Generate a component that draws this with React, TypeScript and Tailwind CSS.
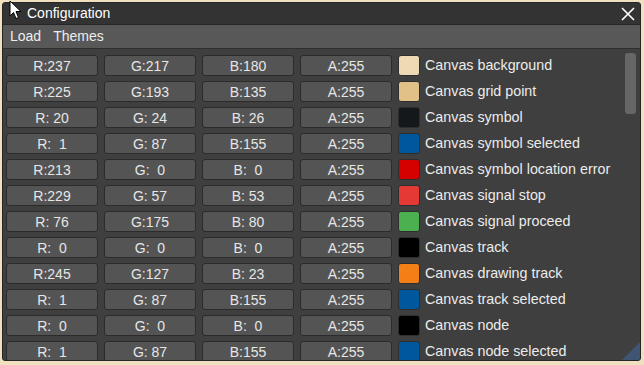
interface ColorEntry {
  label: string
  r: number
  g: number
  b: number
  a: number
}

const entries: ColorEntry[] = [
  { label: 'Canvas background', r: 237, g: 217, b: 180, a: 255 },
  { label: 'Canvas grid point', r: 225, g: 193, b: 135, a: 255 },
  { label: 'Canvas symbol', r: 20, g: 24, b: 26, a: 255 },
  { label: 'Canvas symbol selected', r: 1, g: 87, b: 155, a: 255 },
  { label: 'Canvas symbol location error', r: 213, g: 0, b: 0, a: 255 },
  { label: 'Canvas signal stop', r: 229, g: 57, b: 53, a: 255 },
  { label: 'Canvas signal proceed', r: 76, g: 175, b: 80, a: 255 },
  { label: 'Canvas track', r: 0, g: 0, b: 0, a: 255 },
  { label: 'Canvas drawing track', r: 245, g: 127, b: 23, a: 255 },
  { label: 'Canvas track selected', r: 1, g: 87, b: 155, a: 255 },
  { label: 'Canvas node', r: 0, g: 0, b: 0, a: 255 },
  { label: 'Canvas node selected', r: 1, g: 87, b: 155, a: 255 },
]

// imgui style "%3d" padding
const pad = (n: number) => String(n).padStart(3, ' ')

function Channel({ text }: { text: string }) {
  return (
    <div className="w-[92px] h-[21px] shrink-0 rounded-[3px] bg-[#545454] border border-[#2b2b2b] flex items-center justify-center text-[#e6e6e6] whitespace-pre leading-none">
      {text}
    </div>
  )
}

function Cursor() {
  return (
    <svg className="absolute left-[9px] top-0" width="14" height="20" viewBox="0 0 14 20">
      <path d="M1 1 L1 16 L4.5 12.5 L7 18.5 L9.5 17.5 L7 11.5 L12 11.5 Z" fill="#fff" stroke="#000" strokeWidth="1" />
    </svg>
  )
}

export default function App() {
  return (
    <div
      className="relative w-[644px] h-[365px] bg-[#f1e0bf] p-[2px] pr-[3px] pb-[4px] overflow-hidden"
      style={{ fontFamily: '"Liberation Sans", Arial, sans-serif' }}
    >
      <div className="relative h-full flex flex-col rounded-[3px] border border-[#262626] bg-[#3f3f3f] overflow-hidden text-[14px]">
        {/* Title bar */}
        <div className="h-[22px] shrink-0 bg-[#333333] flex items-center pl-[24px] pr-[5px] text-white border-b border-[#262626]">
          <span className="flex-1">Configuration</span>
          <svg width="14" height="14" viewBox="0 0 14 14">
            <path d="M1 1 L13 13 M13 1 L1 13" stroke="#fff" strokeWidth="1.6" />
          </svg>
        </div>

        {/* Menu bar */}
        <div className="h-[24px] shrink-0 bg-[#585858] flex items-center gap-[12px] pl-[7px] text-[#ececec] border-b border-[#2e2e2e]">
          <span>Load</span>
          <span>Themes</span>
        </div>

        {/* Body */}
        <div className="flex-1 flex min-h-0 pt-[6px]">
          <div className="flex-1 flex flex-col gap-[5px] pl-[3px] overflow-hidden">
            {entries.map((e, i) => (
              <div key={i} className="h-[21px] flex items-center gap-[6px] shrink-0">
                <Channel text={`R:${pad(e.r)}`} />
                <Channel text={`G:${pad(e.g)}`} />
                <Channel text={`B:${pad(e.b)}`} />
                <Channel text={`A:${pad(e.a)}`} />
                <div
                  className="w-[22px] h-[21px] shrink-0 rounded-[3px] border border-[#2e2e2e]"
                  style={{ backgroundColor: `rgb(${e.r},${e.g},${e.b})` }}
                />
                <span className="text-[#ececec] text-[14.3px] whitespace-nowrap leading-[21px] -ml-[1px]">{e.label}</span>
              </div>
            ))}
          </div>
          <div className="w-[15px] shrink-0 -mt-[2px] pr-[3px]">
            <div className="w-[11px] h-[61px] rounded-[3px] bg-[#666666]" />
          </div>
        </div>

        {/* resize grip */}
        <svg className="absolute right-0 bottom-0" width="18" height="18" viewBox="0 0 18 18">
          <path d="M18 0 L18 18 L0 18 Z" fill="#3f5573" />
        </svg>
      </div>
      <Cursor />
    </div>
  )
}
